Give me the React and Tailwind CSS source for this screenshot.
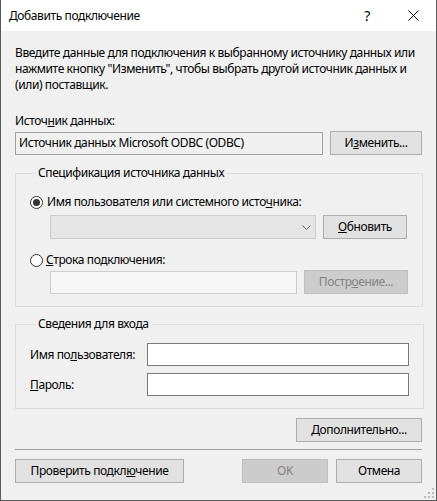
import React from 'react';

const font = { fontFamily: '"Noto Sans", "Open Sans", sans-serif' };

const Btn = ({ children, className = '', disabled }) => (
  <button
    type="button"
    className={`h-[24px] flex items-center justify-center border text-[12px] leading-none ${
      disabled
        ? 'bg-[#cccccc] border-[#bfbfbf] text-[#838383]'
        : 'bg-[#e1e1e1] border-[#adadad] text-black'
    } ${className}`}
  >
    {children}
  </button>
);

const Radio = ({ checked }) => (
  <span className="w-[13px] h-[13px] rounded-full border border-[#333333] bg-white flex items-center justify-center shrink-0">
    {checked && <span className="w-[7px] h-[7px] rounded-full bg-[#333333]" />}
  </span>
);

const Group = ({ title, children, className = '' }) => (
  <fieldset className={`border border-[#dcdcdc] px-[14px] ${className}`}>
    <legend className="ml-[5px] px-[3px] leading-[16px] text-[12px]">{title}</legend>
    {children}
  </fieldset>
);

export default function App() {
  return (
    <div
      className="w-[437px] h-[501px] bg-[#f0f0f0] border-x border-b border-[#5a5a5a] relative text-[12px] tracking-[-0.4px] text-black overflow-hidden"
      style={font}
    >
      {/* title bar */}
      <div className="h-[31px] bg-white flex items-center">
        <span className="pl-[8px] flex-1 leading-[16px]">Добавить подключение</span>
        <span className="w-[46px] h-full flex items-center justify-center text-[14px]">?</span>
        <span className="w-[46px] h-full flex items-center justify-center">
          <svg width="11" height="11" viewBox="0 0 11 11">
            <path d="M0.5 0.5 L10.5 10.5 M10.5 0.5 L0.5 10.5" stroke="#000" strokeWidth="1" />
          </svg>
        </span>
      </div>

      <div className="px-[14px]">
        <p className="mt-[14px] leading-[16px] whitespace-nowrap">
          Введите данные для подключения к выбранному источнику данных или
          <br />
          нажмите кнопку "Изменить", чтобы выбрать другой источник данных и
          <br />
          (или) поставщик.
        </p>

        <div className="mt-[20px] leading-[16px]">
          Источ<u>н</u>ик данных:
        </div>
        <div className="mt-[2px] flex items-center gap-[7px]">
          <div className="w-[308px] h-[23px] border border-[#a0a0a0] bg-[#f0f0f0] flex items-center px-[3px]">
            Источник данных Microsoft ODBC (ODBC)
          </div>
          <Btn className="w-[92px]">
            И<u>з</u>менить...
          </Btn>
        </div>

        <Group title="Спецификация источника данных" className="mt-[10px] pb-[12px]">
          <div className="mt-[13px] h-[16px] flex items-center gap-[4px]">
            <Radio checked />
            <span>
              Имя пользователя или системного исто<u>ч</u>ника:
            </span>
          </div>
          <div className="mt-[5px] pl-[20px] flex items-center gap-[7px]">
            <div className="w-[266px] h-[24px] border border-[#cccccc] bg-[#e5e5e5] flex items-center justify-end pr-[4px]">
              <svg width="9" height="5" viewBox="0 0 9 5">
                <path d="M0.5 0.5 L4.5 4.5 L8.5 0.5" fill="none" stroke="#606060" strokeWidth="1" />
              </svg>
            </div>
            <Btn className="w-[84px]">
              <u>О</u>бновить
            </Btn>
          </div>
          <div className="mt-[13px] h-[16px] flex items-center gap-[3px]">
            <Radio />
            <span>
              <u>С</u>трока подключения:
            </span>
          </div>
          <div className="mt-[2px] pl-[20px] flex items-center gap-[7px]">
            <div className="w-[247px] h-[23px] border border-[#cccccc] bg-[#f7f7f7]" />
            <Btn disabled className="w-[104px]">
              Постр<u>о</u>ение...
            </Btn>
          </div>
        </Group>

        <Group title="Сведения для входа" className="mt-[9px] pb-[12px]">
          <div className="mt-[11px] flex items-center">
            <span className="w-[117px]">
              Имя по<u>л</u>ьзователя:
            </span>
            <div className="w-[262px] h-[23px] border border-[#7a7a7a] bg-white" />
          </div>
          <div className="mt-[7px] flex items-center">
            <span className="w-[117px]">
              <u>П</u>ароль:
            </span>
            <div className="w-[262px] h-[23px] border border-[#7a7a7a] bg-white" />
          </div>
        </Group>

        <div className="mt-[9px] flex justify-end">
          <Btn className="w-[126px]">
            <u>Д</u>ополнительно...
          </Btn>
        </div>

        <div className="mt-[7px] h-px bg-[#a0a0a0]" />

        <div className="mt-[9px] flex items-center">
          <Btn className="w-[169px]">
            Проверить подкл<u>ю</u>чение
          </Btn>
          <div className="flex-1" />
          <Btn disabled className="w-[86px]">
            OK
          </Btn>
          <Btn className="w-[86px] ml-[8px]">Отмена</Btn>
        </div>
      </div>

      {/* size grip */}
      <svg className="absolute right-[2px] bottom-[2px]" width="10" height="10" viewBox="0 0 10 10">
        <rect x="8" y="0" width="2" height="2" fill="#bcbcbc" />
        <rect x="4" y="4" width="2" height="2" fill="#bcbcbc" />
        <rect x="8" y="4" width="2" height="2" fill="#bcbcbc" />
        <rect x="0" y="8" width="2" height="2" fill="#bcbcbc" />
        <rect x="4" y="8" width="2" height="2" fill="#bcbcbc" />
        <rect x="8" y="8" width="2" height="2" fill="#bcbcbc" />
      </svg>
    </div>
  );
}
